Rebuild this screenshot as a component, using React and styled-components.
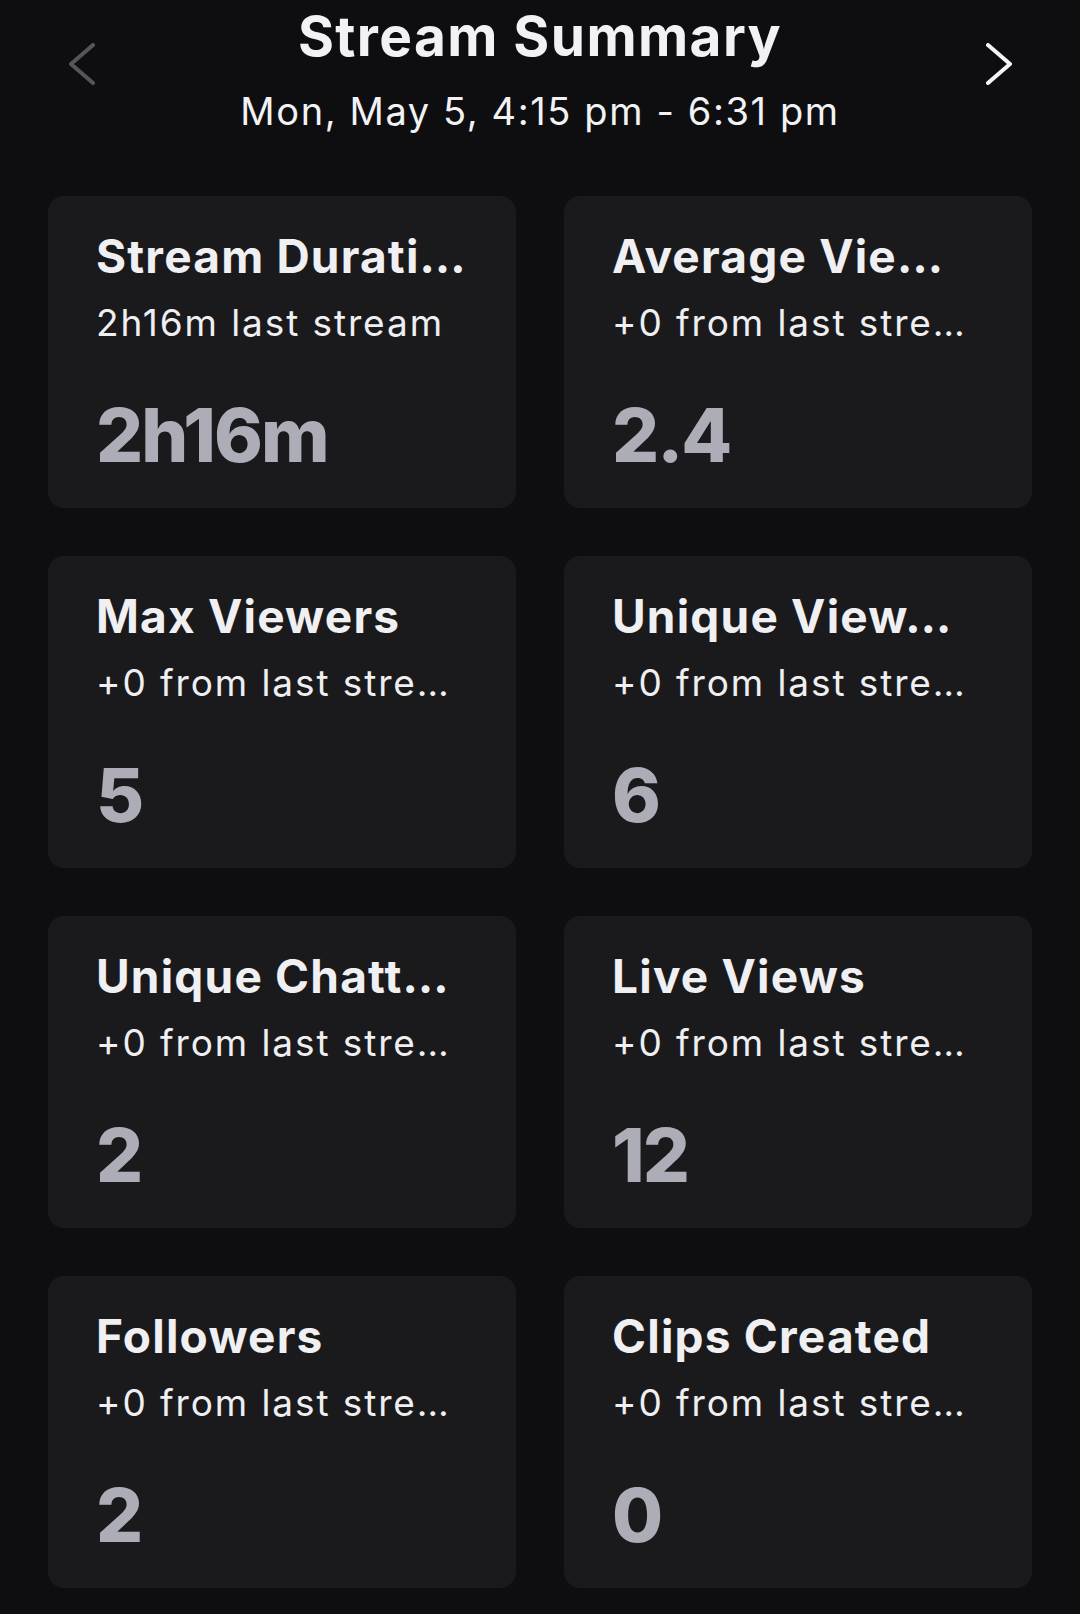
import React from "react";
import styled, { createGlobalStyle } from "styled-components";

// labels are shown the way the app clips them on this screen
const stats = [
  { title: "Stream Durati…", note: "2h16m last stream", value: "2h16m" },
  { title: "Average Vie…", note: "+0 from last stre…", value: "2.4" },
  { title: "Max Viewers", note: "+0 from last stre…", value: "5" },
  { title: "Unique View…", note: "+0 from last stre…", value: "6" },
  { title: "Unique Chatt…", note: "+0 from last stre…", value: "2" },
  { title: "Live Views", note: "+0 from last stre…", value: "12" },
  { title: "Followers", note: "+0 from last stre…", value: "2" },
  { title: "Clips Created", note: "+0 from last stre…", value: "0" },
];

function Chevron({ dir }) {
  const points = dir === "left" ? "24,2 2,21 24,40" : "2,2 24,21 2,40";
  return (
    <svg width="26" height="42" viewBox="0 0 26 42">
      <polyline
        points={points}
        fill="none"
        stroke="currentColor"
        strokeWidth="4"
        strokeLinecap="round"
        strokeLinejoin="round"
      />
    </svg>
  );
}

export default function App() {
  return (
    <>
      <GlobalStyle />
      <Page>
        <Header>
          <NavButton $muted aria-label="Previous stream">
            <Chevron dir="left" />
          </NavButton>
          <HeaderText>
            <h1>Stream Summary</h1>
            <p>Mon, May 5, 4:15 pm - 6:31 pm</p>
          </HeaderText>
          <NavButton aria-label="Next stream">
            <Chevron dir="right" />
          </NavButton>
        </Header>

        <Grid>
          {stats.map((s) => (
            <StatCard key={s.title}>
              <h3>{s.title}</h3>
              <p className="note">{s.note}</p>
              <p className="value">{s.value}</p>
            </StatCard>
          ))}
        </Grid>
      </Page>
    </>
  );
}

////////////////////////////////////////////Styled-Components
const GlobalStyle = createGlobalStyle`
  html, body {
    margin: 0;
    background: #0e0e10;
  }
  body {
    font-family: Inter, "Noto Sans", "Liberation Sans", sans-serif;
    color: #efeff1;
  }
`;

const Page = styled.div`
  min-height: 1614px;
  background: #0e0e10;
  padding: 0 48px;
  box-sizing: border-box;
`;

const Header = styled.header`
  display: grid;
  grid-template-columns: 67px minmax(0, 1fr) 67px;
  align-items: start;
  padding-top: 3px;
`;

const NavButton = styled.button`
  display: flex;
  justify-content: center;
  margin-top: 40px;
  padding: 0;
  background: none;
  border: none;
  color: ${(p) => (p.$muted ? "#55555d" : "#f5f5f7")};
`;

const HeaderText = styled.div`
  text-align: center;
  white-space: nowrap;

  h1 {
    margin: 0;
    font-size: 55px;
    font-weight: 700;
    letter-spacing: 1.4px;
    line-height: 1.21;
    color: #f2f2f4;
  }

  p {
    margin: 19px 0 0;
    font-size: 38px;
    font-weight: 400;
    letter-spacing: 1.6px;
    line-height: 1.21;
    color: #f2f2f4;
  }
`;

const Grid = styled.div`
  display: grid;
  grid-template-columns: repeat(2, minmax(0, 1fr));
  gap: 48px;
  margin-top: 61px;
`;

const StatCard = styled.div`
  height: 312px;
  min-width: 0;
  box-sizing: border-box;
  padding: 33px 48px 0;
  background: #1a1a1d;
  border-radius: 16px;

  h3,
  p {
    margin: 0;
    white-space: nowrap;
    line-height: 1.21;
  }

  h3 {
    font-size: 46px;
    font-weight: 700;
    letter-spacing: 1.2px;
    color: #f0f0f2;
  }

  .note {
    margin-top: 17px;
    font-size: 37px;
    font-weight: 400;
    letter-spacing: 1.9px;
    color: #efeff1;
  }

  .value {
    margin-top: 45px;
    font-size: 74px;
    font-weight: 800;
    letter-spacing: -2px;
    color: #adadb8;
  }
`;
